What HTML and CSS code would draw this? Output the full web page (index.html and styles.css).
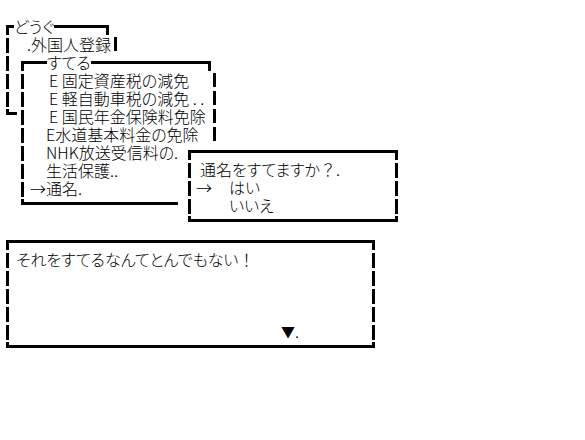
FILE: index.html
```html
<!DOCTYPE html>
<html lang="ja">
<head>
<meta charset="utf-8">
<title>どうぐ</title>
<link rel="stylesheet" href="styles.css">
</head>
<body>
<div class="stage">
  <div class="win dougu">
    <div class="cap"><span class="edge edge-dougu"></span><span class="title">どうぐ</span><span class="rule tick tick-dougu"></span></div>
    <div class="side">
      <div class="row pad-dougu">.外国人登録<i class="bar"></i></div>
      <div class="row"></div>
      <div class="row"></div>
      <div class="row"></div>
    </div>
    <div class="foot foot-dougu"></div>
  </div>

  <div class="win suteru">
    <div class="cap"><span class="edge edge-suteru"></span><span class="title">すてる</span><span class="rule tick tick-suteru"></span></div>
    <div class="side">
      <div class="row pad-equip">E 固定資産税の減免<i class="bar"></i></div>
      <div class="row pad-equip">E 軽自動車税の減免 . .<i class="bar"></i></div>
      <div class="row pad-equip">E 国民年金保険料免除<i class="bar"></i></div>
      <div class="row pad-suteru">E水道基本料金の免除<i class="bar"></i></div>
      <div class="row pad-suteru">NHK放送受信料の.</div>
      <div class="row pad-suteru">生活保護..</div>
      <div class="row pad-cursor">→通名.</div>
    </div>
    <div class="foot foot-suteru"></div>
  </div>

  <div class="win confirm">
    <div class="cap"><span class="rule frame"></span></div>
    <div class="side both">
      <div class="row pad-question">通名をすてますか<span class="full">？</span>.</div>
      <div class="row pad-choice"><span class="choice-cursor">→</span>はい</div>
      <div class="row pad-choice"><span class="choice-cursor"></span>いいえ</div>
    </div>
    <div class="foot frame"></div>
  </div>
</div>

<div class="message">
  <div class="cap"><span class="rule frame"></span></div>
  <div class="side both">
    <div class="row pad-message">それをすてるなんてとんでもない<span class="full">！</span></div>
    <div class="row"></div>
    <div class="row"></div>
    <div class="row"></div>
    <div class="row pad-next"><span class="next">▼</span>.</div>
  </div>
  <div class="foot frame"></div>
</div>
</body>
</html>
```

FILE: styles.css
```css
* {
  box-sizing: border-box;
  margin: 0;
  padding: 0;
}

html, body {
  background: #fff;
}

body {
  width: 585px;
  height: 440px;
  overflow: hidden;
  color: #000;
  font-family: "Noto Sans CJK JP", "Noto Sans", sans-serif;
  font-size: 16px;
  font-weight: 300;
  line-height: 18px;
  font-feature-settings: "palt" 1;
}

.stage {
  position: relative;
  height: 232px;
}

.win {
  position: absolute;
  background: #fff;
}

.dougu {
  left: 6px;
  top: 17px;
  width: 111px;
}

.suteru {
  left: 21px;
  top: 53px;
  width: 195px;
}

.confirm {
  left: 188px;
  top: 142px;
  width: 210px;
}

.message {
  margin-left: 6px;
  width: 369px;
  background: #fff;
}

/* top edge of a window */
.cap {
  display: flex;
  height: 18px;
}

.title {
  white-space: nowrap;
}

.edge,
.rule {
  height: 18px;
}

.edge {
  background:
    linear-gradient(#000, #000) 0 8px / 100% 3px no-repeat,
    linear-gradient(#000, #000) 0 8px / 3px 10px no-repeat;
}

.edge-dougu { width: 8px; }
.edge-suteru { width: 26px; }

.rule {
  flex: 1;
  background: linear-gradient(#000, #000) 0 8px / 100% 3px no-repeat;
}

.rule.tick {
  background:
    linear-gradient(#000, #000) 0 8px / 100% 3px no-repeat,
    linear-gradient(#000, #000) 100% 8px / 3px 10px no-repeat;
}

.tick-dougu { margin-right: 8px; }
.tick-suteru { margin-right: 5px; }

.rule.frame {
  background:
    linear-gradient(#000, #000) 0 8px / 100% 3px no-repeat,
    linear-gradient(#000, #000) 0 8px / 3px 10px no-repeat,
    linear-gradient(#000, #000) 100% 8px / 3px 10px no-repeat;
}

/* dashed side edges, one segment per text line */
.side {
  background: linear-gradient(transparent 3px, #000 3px) 0 0 / 3px 18px repeat-y;
}

.side.both {
  background:
    linear-gradient(transparent 3px, #000 3px) 0 0 / 3px 18px repeat-y,
    linear-gradient(transparent 3px, #000 3px) 100% 0 / 3px 18px repeat-y;
}

.row {
  display: flex;
  align-items: center;
  height: 18px;
  white-space: pre;
}

.bar {
  width: 3px;
  height: 14px;
  margin-left: auto;
  background: #000;
}

/* bottom edge */
.foot {
  height: 14px;
}

.foot-dougu {
  background:
    linear-gradient(#000, #000) 0 2px / 3px 6px no-repeat,
    linear-gradient(#000, #000) 0 5px / 11px 3px no-repeat;
}

.foot-suteru {
  background:
    linear-gradient(#000, #000) 0 2px / 3px 6px no-repeat,
    linear-gradient(#000, #000) 0 5px / 157px 3px no-repeat;
}

.foot.frame {
  background:
    linear-gradient(#000, #000) 0 2px / 3px 6px no-repeat,
    linear-gradient(#000, #000) 100% 2px / 3px 6px no-repeat,
    linear-gradient(#000, #000) 0 5px / 100% 3px no-repeat;
}

/* text placement */
.pad-dougu { padding-left: 21px; }
.pad-suteru { padding-left: 25px; }
.pad-equip { padding-left: 28px; }
.pad-cursor { padding-left: 9px; }
.pad-question { padding-left: 12px; }
.pad-choice { padding-left: 8px; }
.pad-message { padding-left: 10px; }
.pad-next { padding-left: 275px; }

.full {
  font-feature-settings: normal;
}

.choice-cursor {
  display: inline-block;
  width: 33px;
}

.next {
  font-size: 14px;
}
```
